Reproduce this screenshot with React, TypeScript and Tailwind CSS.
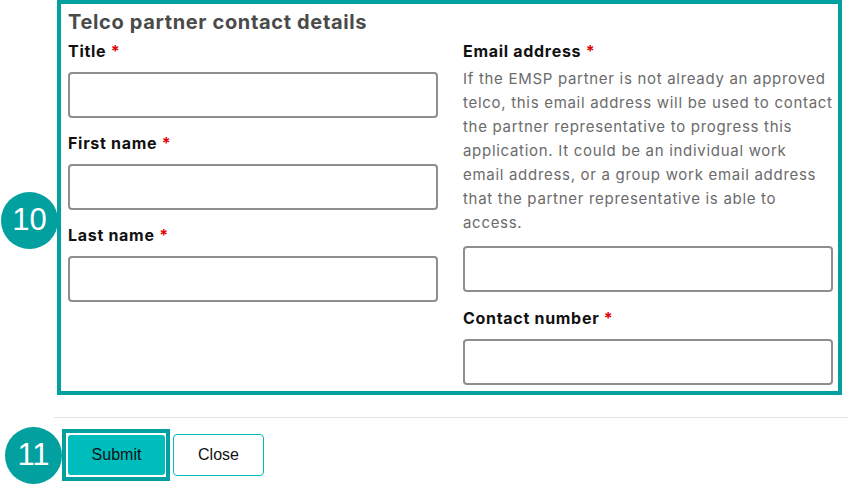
const font = { fontFamily: '"Inter", "Liberation Sans", sans-serif' };

function Label({ text }: { text: string }) {
  return (
    <label className="block text-[16px] leading-[20px] font-bold text-[#111] tracking-[0.7px]">
      {text} <span className="text-[#e00000]">*</span>
    </label>
  );
}

function Input() {
  return (
    <input
      type="text"
      className="block w-full h-[46px] rounded-[4px] border-2 border-[#8e8e8e] bg-white outline-none"
    />
  );
}

function Badge({ n, className }: { n: string; className: string }) {
  return (
    <div
      className={`absolute w-[57px] h-[57px] rounded-full bg-[#02a09f] text-white flex items-center justify-center text-[31px] ${className}`}
      style={{ fontFamily: '"Liberation Sans", Arial, sans-serif' }}
    >
      {n}
    </div>
  );
}

export default function App() {
  return (
    <div className="relative w-[848px] h-[494px] bg-white overflow-hidden" style={font}>
      {/* Highlighted form section */}
      <div className="ml-[57px] w-[785px] border-4 border-[#02a09f] pl-[7px] pr-[5px] pt-[5px] pb-[6px]">
        <h2 className="text-[20px] leading-[26px] font-bold text-[#4a4a4a] tracking-[0.65px]">
          Telco partner contact details
        </h2>
        <div className="mt-[6px] grid grid-cols-2 gap-x-[25px]">
          <div>
            <Label text="Title" />
            <div className="mt-[11px]">
              <Input />
            </div>
            <div className="mt-[15px]">
              <Label text="First name" />
            </div>
            <div className="mt-[11px]">
              <Input />
            </div>
            <div className="mt-[15px]">
              <Label text="Last name" />
            </div>
            <div className="mt-[11px]">
              <Input />
            </div>
          </div>
          <div>
            <Label text="Email address" />
            <p className="mt-[6px] whitespace-nowrap text-[15px] leading-[24px] text-[#6b6b6b] tracking-[0.7px]">
              If the EMSP partner is not already an approved
              <br />
              telco, this email address will be used to contact
              <br />
              the partner representative to progress this
              <br />
              application. It could be an individual work
              <br />
              email address, or a group work email address
              <br />
              that the partner representative is able to
              <br />
              access.
            </p>
            <div className="mt-[11px]">
              <Input />
            </div>
            <div className="mt-[16px]">
              <Label text="Contact number" />
            </div>
            <div className="mt-[11px]">
              <Input />
            </div>
          </div>
        </div>
      </div>

      <div className="ml-[54px] mt-[22px] border-t border-[#e2e2e2]" />

      {/* Actions */}
      <div
        className="ml-[62px] mt-[11px] flex items-center gap-[3px]"
        style={{ fontFamily: '"Liberation Sans", Arial, sans-serif' }}
      >
        <div className="border-4 border-[#02a09f] py-[2px] pl-[2px] pr-[1px]">
          <button className="block w-[97px] h-[40px] rounded-[3px] bg-[#00bdbd] text-[16px] text-[#111]">
            Submit
          </button>
        </div>
        <button className="w-[91px] h-[42px] rounded-[4px] border border-[#00bdbd] bg-white text-[16px] text-[#111]">
          Close
        </button>
      </div>

      <Badge n="10" className="left-[1px] top-[192px]" />
      <Badge n="11" className="left-[5px] top-[427px]" />
    </div>
  );
}
